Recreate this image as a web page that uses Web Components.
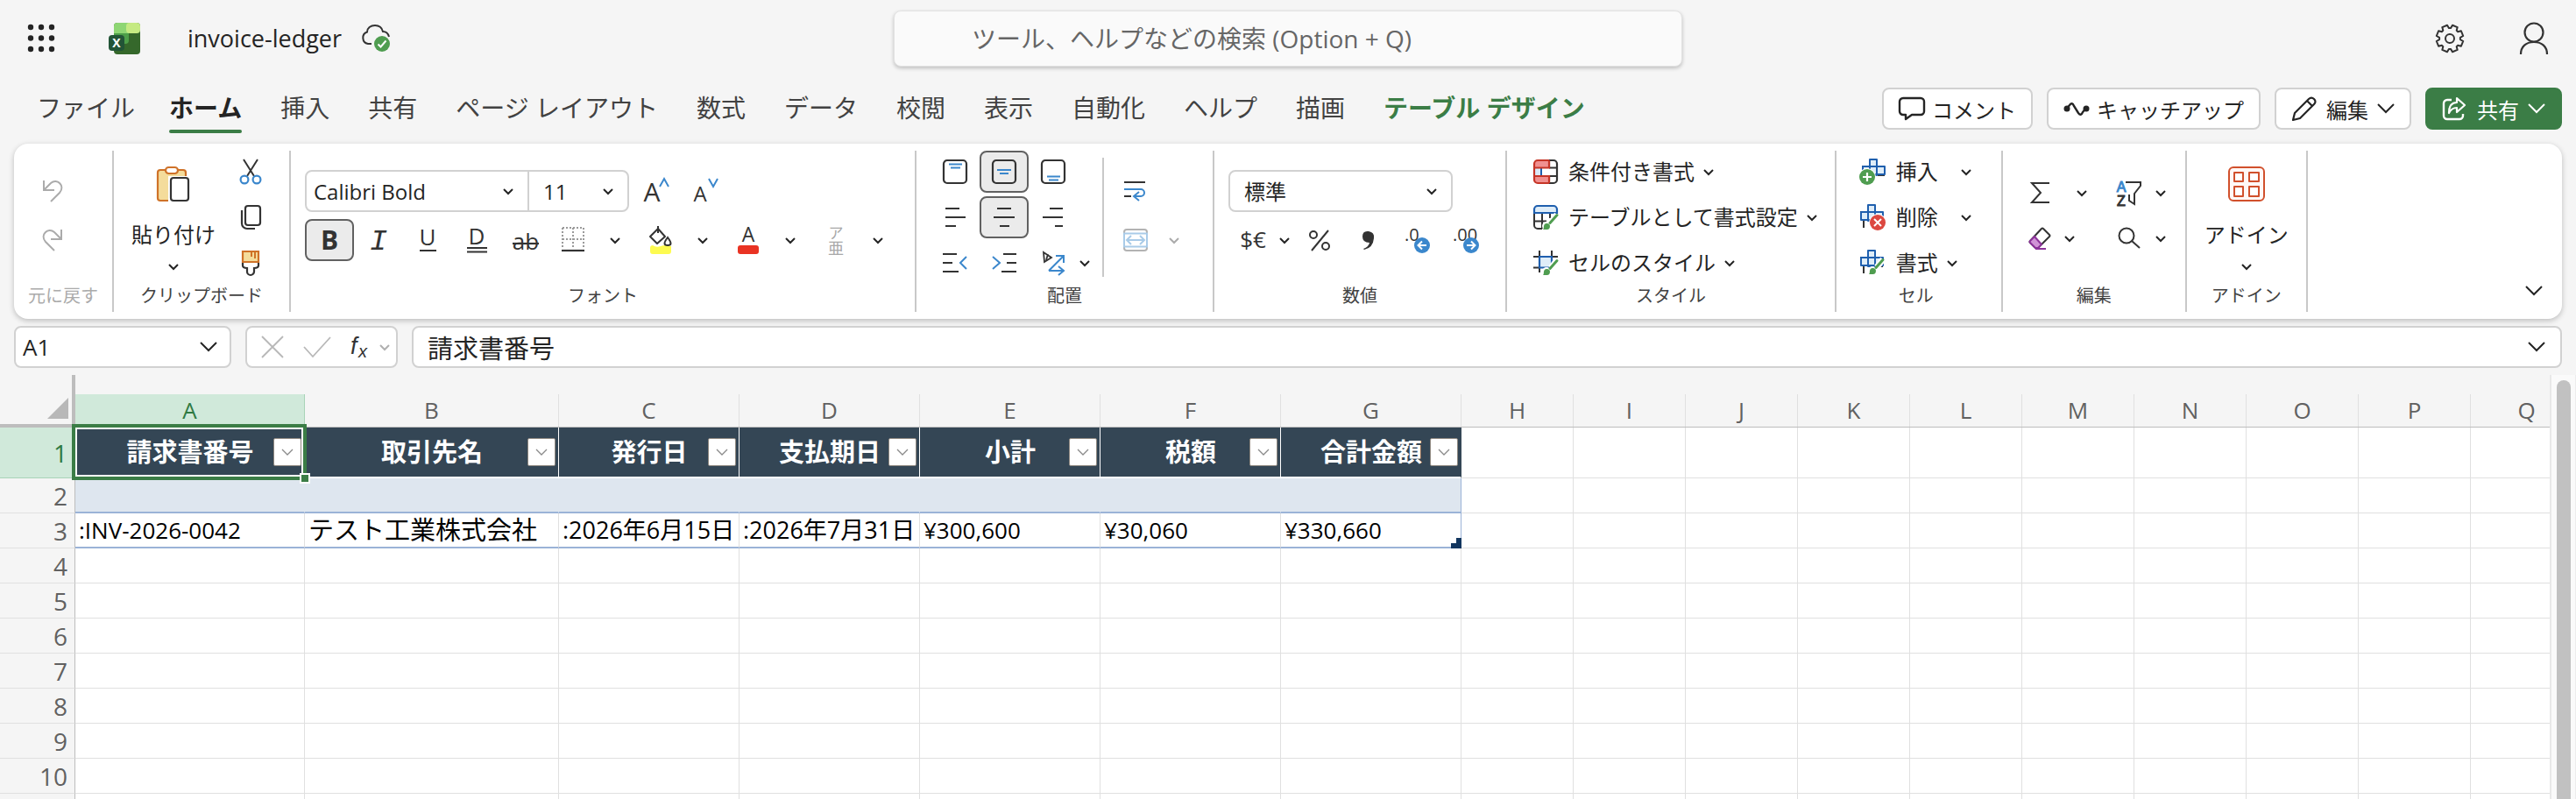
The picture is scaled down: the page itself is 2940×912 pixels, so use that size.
<!DOCTYPE html>
<html lang="ja">
<head>
<meta charset="utf-8">
<title>invoice-ledger</title>
<style>
  html, body {
    margin: 0;
    height: 100%;
    overflow: hidden;
    background: #f5f5f5;
    color: #242424;
    font-family: "Open Sans", "Noto Sans CJK JP", sans-serif;
    font-size: 24px;
  }
</style>
</head>
<body>
<ledger-app></ledger-app>

<script>
// outline of the settings cog: eight teeth, notch at the top
function gearPath(cx, cy, outer, inner) {
  const points = [];
  for (let i = 0; i < 8; i++) {
    const mid = (i + 0.5) * Math.PI / 4;
    for (const [offset, r] of [[-0.3, inner], [-0.2, outer], [0.2, outer], [0.3, inner]]) {
      const a = mid + offset;
      points.push((cx + r * Math.sin(a)).toFixed(1) + " " + (cy - r * Math.cos(a)).toFixed(1));
    }
  }
  return "M" + points.join("L") + "Z";
}

const INK = "#333";
const BLUE = "#3b87cc";
const NAVY = "#1f5fae";
const GREEN = "#4f9d50";

const sheetCross = `<path d="M12 9H1M5 19V27M14 27V19M19 9H27M19 19H27" stroke="${INK}" stroke-width="2"/>
  <path d="M10 1h8v8h9v9h-9v1h-8v-1H2V9h8z" fill="#dfedf8" stroke="${NAVY}" stroke-width="2" stroke-linejoin="round"/>
  <path d="M10 9h8v9h-8z" stroke="${NAVY}" stroke-width="2"/>`;
const brushMark = `<path d="M27 11l-7 9" stroke="#fff" stroke-width="7"/><circle cx="15" cy="24" r="5" fill="#fff"/>
  <path d="M27 11.5l-8 9" stroke="${GREEN}" stroke-width="3" stroke-linecap="round"/>
  <path d="M11 28q1-1 1-4a3.5 3.5 0 1 1 3 4z" fill="${GREEN}"/>`;

// name: [width, height, markup]
const ICONS = {
  waffle: [32, 32, [3, 15.5, 28].map(y => [4, 16, 28].map(x => `<circle cx="${x}" cy="${y}" r="3.2" fill="#242424"/>`).join("")).join("")],
  excel: [36, 36, `<rect x="6" width="30" height="36" rx="4" fill="#35682b"/>
    <path d="M6 12V4a4 4 0 0 1 4-4h13v12z" fill="#8ed673"/>
    <rect x="20" width="16" height="12" rx="4" fill="#c5ea82"/>
    <path d="M6 12h17v8a4 4 0 0 1-4 4H6z" fill="#4d9f49"/>
    <rect y="14" width="18" height="18" rx="4" fill="#225437"/>
    <text x="9" y="28" font-size="14" font-weight="700" fill="#fff" text-anchor="middle">X</text>`],
  cloud: [34, 32, `<path d="M12 22H8a7 7 0 0 1-1-13.500C7 4 11 1 16 1c5 0 8 3 9 7 3 0 6 2 7 6" stroke="${INK}" stroke-width="2"/>
    <circle cx="24" cy="22" r="9" fill="${GREEN}"/><path d="M19.500 22.500l3 3 6-7" stroke="#fff" stroke-width="2"/>`],
  gear: [34, 34, `<path d="${gearPath(17, 17, 15.5, 12)}" stroke="${INK}" stroke-width="2" stroke-linejoin="round"/>
    <circle cx="17" cy="17" r="5" stroke="${INK}" stroke-width="2"/>`],
  person: [34, 38, `<circle cx="17" cy="12" r="10.5" stroke="${INK}" stroke-width="2.2"/>
    <path d="M2 37c0-9 6-14 15-14s15 5 15 14" stroke="${INK}" stroke-width="2.2"/>`],
  comment: [30, 28, `<path d="M5 2h20a4 4 0 0 1 4 4v11a4 4 0 0 1-4 4H15l-7 5v-5H5a4 4 0 0 1-4-4V6a4 4 0 0 1 4-4z" stroke="#242424" stroke-width="2.4" stroke-linejoin="round"/>`],
  catchup: [30, 28, `<path d="M3 15l4-5q3-4 5 1l5 8q3 4 5-1l4-5" stroke="#242424" stroke-width="2.4"/>
    <circle cx="4" cy="14" r="3.5" fill="#242424"/><circle cx="26" cy="14" r="3.500" fill="#242424"/>`],
  pencil: [30, 30, `<path d="M2 28l2-8L20 4q3-3 6 0t0 6L10 26zM18 6l6 6" stroke="#242424" stroke-width="2.2" stroke-linejoin="round"/>`],
  share: [30, 28, `<path d="M11 4H6a4 4 0 0 0-4 4v14a4 4 0 0 0 4 4h14a4 4 0 0 0 4-4v-2" stroke="#fff" stroke-width="2.4"/>
    <path d="M17 2l9 8-9 8v-5c-5 0-7 2-9 6 0-8 3-12 9-12z" stroke="#fff" stroke-width="2.2" stroke-linejoin="round"/>`],
  chevron: [16, 16, `<path d="M3 6l5 5 5-5" stroke="currentColor" stroke-width="2"/>`],
  chevronWide: [20, 16, `<path d="M1 3l9 9 9-9" stroke="currentColor" stroke-width="2"/>`],
  chevronThin: [16, 16, `<path d="M2 5l6 6 6-6" stroke="#8a8a8a" stroke-width="1.3"/>`],
  undo: [24, 26, `<path d="M2 1v11h12M2 12l8-8c7-6 17 3 10 11L10 25" stroke="#ababab" stroke-width="2"/>`],
  redo: [24, 26, `<path d="M22 1v11H10M22 12l-8-8c-7-6-17 3-10 11L14 25" stroke="#ababab" stroke-width="2"/>`],
  paste: [38, 40, `<rect x="1" y="4" width="32" height="35" rx="3" fill="#f4dc9b" stroke="#cf7228" stroke-width="2.2"/>
    <rect x="10" y="1" width="14" height="7" rx="3.5" fill="#fff" stroke="#cf7228" stroke-width="2.2"/>
    <path d="M13 41V11h22v30z" fill="#fff"/>
    <rect x="16" y="13" width="20" height="26" rx="3" fill="#fff" stroke="${INK}" stroke-width="2.2"/>`],
  cut: [26, 28, `<path d="M5 0l12 19M21 0L9 19" stroke="${INK}" stroke-width="2"/>
    <circle cx="6" cy="23" r="4.4" stroke="${BLUE}" stroke-width="2.2"/><circle cx="20" cy="23" r="4.4" stroke="${BLUE}" stroke-width="2.2"/>`],
  copy: [24, 28, `<rect x="6" y="1" width="17" height="22" rx="3" stroke="${INK}" stroke-width="2.2"/>
    <path d="M2 6v15a6 6 0 0 0 6 6h9" stroke="${INK}" stroke-width="2.2"/>`],
  painter: [22, 28, `<path d="M2 14v3q0 3 5 3v4a3.5 3.5 0 0 0 8 0v-4q5 0 5-3v-3" stroke="${INK}" stroke-width="2.2"/>
    <path d="M2 1h18v12H2z" fill="#f4dc9b" stroke="#cf7228" stroke-width="2.2"/><path d="M12 2v5M16 2v7" stroke="#cf7228" stroke-width="2"/>`],
  grow: [30, 32, `<text x="9" y="28" font-size="30" text-anchor="middle" fill="${INK}">A</text>
    <path d="M18 11l5-9 5 9" stroke="${BLUE}" stroke-width="2"/>`],
  shrink: [30, 32, `<text x="8" y="28" font-size="24" text-anchor="middle" fill="${INK}">A</text>
    <path d="M18 2l5 9 5-9" stroke="${BLUE}" stroke-width="2"/>`],
  bold: [28, 30, `<text x="14" y="26" font-size="30" font-weight="700" text-anchor="middle" fill="${INK}">B</text>`],
  italic: [28, 30, `<text x="14" y="26" font-size="34" font-style="italic" font-family="Liberation Mono" text-anchor="middle" fill="${INK}">I</text>`],
  underline: [28, 30, `<text x="14" y="21" font-size="26" text-anchor="middle" fill="${INK}">U</text><path d="M5 27h19" stroke="${INK}" stroke-width="2"/>`],
  doubleUnderline: [28, 30, `<text x="14" y="20" font-size="26" text-anchor="middle" fill="${INK}">D</text>
    <path d="M3 24h23M3 28.5h23" stroke="${INK}" stroke-width="2"/>`],
  strike: [32, 30, `<text x="16" y="26" font-size="26" text-anchor="middle" fill="${INK}">ab</text><path d="M1 19h30" stroke="${INK}" stroke-width="2.2"/>`],
  borders: [26, 28, `<path d="M1 0h24M1 13h24M1 0v24M13 0v24M25 0v24" stroke="#9a9a9a" stroke-width="2" stroke-dasharray="2 2"/>
    <path d="M0 26h26" stroke="${INK}" stroke-width="2.2"/>`],
  fill: [28, 32, `<path d="M2 25q0-3 3-3 4 3 9 1t12 0v6q0 3-3 3H5q-3 0-3-3z" fill="#fdfb50"/>
    <path d="M11 3l8 9-9 8-8-8zM11 0v8" stroke="${INK}" stroke-width="2" stroke-linejoin="round"/>
    <path d="M22 13q7 9 0 9t0-9z" fill="#fff" stroke="${INK}" stroke-width="2"/>`],
  fontColor: [26, 32, `<text x="13" y="18" font-size="23" text-anchor="middle" fill="${INK}">A</text><rect x="1" y="22" width="24" height="10" rx="3" fill="#e93323"/>`],
  ruby: [22, 34, `<text x="11" y="15" font-size="17" text-anchor="middle" fill="#a8a8a8">ア</text><text x="11" y="33" font-size="18" text-anchor="middle" fill="#a8a8a8">亜</text>`],
  alignTop: [28, 28, `<rect x="1" y="1" width="26" height="26" rx="4" stroke="${INK}" stroke-width="2.2"/><path d="M7 5.5h15M9 9.5h11" stroke="${BLUE}" stroke-width="2"/>`],
  alignMiddle: [28, 28, `<rect x="1" y="1" width="26" height="26" rx="4" stroke="${INK}" stroke-width="2.2"/><path d="M6 12h16M9 16h10" stroke="${BLUE}" stroke-width="2"/>`],
  alignBottom: [28, 28, `<rect x="1" y="1" width="26" height="26" rx="4" stroke="${INK}" stroke-width="2.2"/><path d="M7 19.5h15M9 23.5h11" stroke="${BLUE}" stroke-width="2"/>`],
  alignLeft: [24, 24, `<path d="M1 2h16M1 12h23M1 22h12" stroke="${INK}" stroke-width="2"/>`],
  alignCenter: [24, 24, `<path d="M4 2h16M0 12h24M7 22h11" stroke="${INK}" stroke-width="2"/>`],
  alignRight: [24, 24, `<path d="M8 2h15M0 12h23M14 22h9" stroke="${INK}" stroke-width="2"/>`],
  outdent: [28, 24, `<path d="M0 2h16M0 12h11M0 22h18" stroke="${INK}" stroke-width="2"/><path d="M27 5l-7 7 7 7" stroke="${BLUE}" stroke-width="2"/>`],
  indent: [28, 24, `<path d="M13 2h15M17 12h11M11 22h17" stroke="${INK}" stroke-width="2"/><path d="M1 5l8 7-8 7" stroke="${BLUE}" stroke-width="2"/>`],
  orientation: [28, 28, `<path d="M3 2l9 6-8 5zM8 4l-2 7" stroke="${INK}" stroke-width="1.8"/>
    <path d="M9 23L26 6M17 6h9v8M9 23h16M20 18l6 5-6 5" stroke="${BLUE}" stroke-width="2"/>`],
  wrap: [26, 24, `<path d="M0 2h24M0 18h8" stroke="${INK}" stroke-width="2"/><path d="M0 10h19a4 4 0 0 1 0 8h-7M17 13l-6 5 6 5" stroke="${BLUE}" stroke-width="2"/>`],
  merge: [28, 26, `<rect x="1" y="1" width="26" height="24" rx="3" stroke="#b3b3b3" stroke-width="2"/>
    <path d="M0 5.5h28M0 20.5h28M1 5v16M27 5v16M5 13h18M9 8l-5 5 5 5M19 8l5 5-5 5" stroke="#a9cbe8" stroke-width="2"/>`],
  currency: [34, 30, `<text x="17" y="24" font-size="26" text-anchor="middle" fill="${INK}">$€</text>`],
  percent: [28, 28, `<circle cx="7" cy="8" r="4" stroke="${INK}" stroke-width="2"/><circle cx="21" cy="21" r="4" stroke="${INK}" stroke-width="2"/><path d="M24 3L5 26" stroke="${INK}" stroke-width="2"/>`],
  comma: [16, 24, `<path d="M2 22q6-2 7-7-8 0-8-7t7-6q7 1 6 8-1 11-11 13z" fill="${INK}"/>`],
  lessDecimal: [30, 32, `<text x="0" y="17" font-size="20" fill="${INK}">.0</text><circle cx="20" cy="22" r="9" fill="${BLUE}"/>
    <path d="M25 22H16M20 17.5L15.5 22l4.5 4.5" stroke="#fff" stroke-width="2"/>`],
  moreDecimal: [30, 32, `<text x="-1" y="17" font-size="20" fill="${INK}">.00</text><circle cx="20" cy="22" r="9" fill="${BLUE}"/>
    <path d="M15 22h9M20 17.5l4.5 4.5-4.5 4.5" stroke="#fff" stroke-width="2"/>`],
  conditional: [28, 28, `<path d="M18 1h5a4 4 0 0 1 4 4v18a4 4 0 0 1-4 4h-5M18 9.5h9M18 19h9M18 1v8M18 19v8" stroke="${INK}" stroke-width="2.2"/>
    <path d="M1 9.5h8V19H1z" fill="#d9eafa"/><path d="M9 9.5V19" stroke="${NAVY}" stroke-width="2"/>
    <path d="M18 1v8.5H1V5a4 4 0 0 1 4-4zM18 27v-8H1v4a4 4 0 0 0 4 4z" fill="#f09090"/>
    <path d="M18 1v8.5H1M18 27v-8H1M18 1H5a4 4 0 0 0-4 4v18a4 4 0 0 0 4 4h13" stroke="#c63527" stroke-width="2.2"/>`],
  tableFormat: [28, 28, `<path d="M1 9v14a4 4 0 0 0 4 4h5M1 18.5h14M10 9v18M19 9v6" stroke="${INK}" stroke-width="2"/>
    <path d="M1 9V5a4 4 0 0 1 4-4h18a4 4 0 0 1 4 4v4z" fill="#dfedf8" stroke="${NAVY}" stroke-width="2.2"/>${brushMark}`],
  cellStyle: [28, 28, `<path d="M7 0v25M21 0v8M0 7h28M0 19.5h8" stroke="${INK}" stroke-width="2"/>
    <path d="M7 7h14v12.5H7z" fill="#dfedf8" stroke="${NAVY}" stroke-width="2.2"/>${brushMark}`],
  insertCells: [30, 30, `<g transform="translate(2 0)">${sheetCross}</g><circle cx="9" cy="21" r="10" fill="#fff"/><circle cx="9" cy="21" r="9" fill="${GREEN}"/>
    <path d="M9 16v10M4 21h10" stroke="#fff" stroke-width="2.2"/>`],
  deleteCells: [30, 30, `${sheetCross}<circle cx="21" cy="21" r="10" fill="#fff"/><circle cx="21" cy="21" r="9" fill="#dc4840"/>
    <path d="M17 17l8 8M25 17l-8 8" stroke="#fff" stroke-width="2"/>`],
  formatCells: [30, 30, `${sheetCross}${brushMark}`],
  sum: [24, 26, `<path d="M23 2H3l10 11L3 24h20" stroke="${INK}" stroke-width="2"/>`],
  sortFilter: [28, 30, `<path d="M9 3h18v4l-7 9v12l-6-4v-7" stroke="${INK}" stroke-width="2"/><path d="M-1 0h11v15H-1z" fill="#fff"/>
    <text x="5" y="14" font-family="Liberation Sans" font-size="16" text-anchor="middle" fill="${BLUE}" stroke="${BLUE}">A</text>
    <text x="5" y="30" font-family="Liberation Sans" font-size="16" text-anchor="middle" fill="${INK}" stroke="${INK}">Z</text>`],
  eraser: [26, 26, `<path d="M2 16L15 2q1-1 2 0l7 7q1 1 0 2L11 24H8l-6-6q-1-1 0-2z" stroke="${INK}" stroke-width="2"/>
    <path d="M7 11l8 9-4 4H8l-6-6q-1-1 0-2z" fill="#d093d6" stroke="#8c339a" stroke-width="2"/><path d="M8 25h12" stroke="#8c339a" stroke-width="2"/>`],
  find: [26, 26, `<circle cx="10" cy="10" r="8.5" stroke="${INK}" stroke-width="2"/><path d="M16 16l9 8" stroke="${INK}" stroke-width="2"/>`],
  addin: [42, 40, `<rect x="1" y="1" width="40" height="38" rx="5" fill="#fff8f6" stroke="#d1502c" stroke-width="2"/>
    <path d="M7 7h10v10H7zM24 7h11v10H24zM7 23h10v11H7zM24 23h11v11H24z" fill="#fff" stroke="#d1502c" stroke-width="2" stroke-linejoin="round"/>`],
  cancel: [26, 26, `<path d="M1 1l24 24M25 1L1 25" stroke="#b8b8b8" stroke-width="1.8"/>`],
  accept: [32, 26, `<path d="M1 13l10 11L31 2" stroke="#b8b8b8" stroke-width="1.8"/>`],
  fx: [26, 30, `<text x="1" y="23" font-size="27" font-style="italic" fill="${INK}">f</text><text x="10" y="27" font-size="20" font-style="italic" fill="${INK}">x</text>`]
};

class AppIcon extends HTMLElement {
  connectedCallback() {
    if (this.shadowRoot) return;
    const [width, height, markup] = ICONS[this.getAttribute("name")];
    this.attachShadow({ mode: "open" }).innerHTML = `
      <style>
        :host { display: inline-flex; flex: none; }
        svg { display: block; overflow: visible; }
      </style>
      <svg width="${width}" height="${height}" viewBox="0 0 ${width} ${height}" fill="none" aria-hidden="true">${markup}</svg>`;
  }
}
customElements.define("app-icon", AppIcon);

// Ribbon button. shape: split, drop, slim, row, stack (a plain icon without one)
class ToolButton extends HTMLElement {
  connectedCallback() {
    if (this.shadowRoot) return;
    const icon = this.getAttribute("icon");
    const pressed = this.hasAttribute("pressed");
    this.attachShadow({ mode: "open" }).innerHTML = `
      <style>
        :host { display: flex; flex: none; }
        button {
          display: flex;
          align-items: center;
          justify-content: center;
          box-sizing: border-box;
          width: 56px;
          height: 48px;
          padding: 0;
          border: 2px solid transparent;
          border-radius: 8px;
          background: none;
          color: inherit;
          font: inherit;
          line-height: 32px;
          white-space: nowrap;
        }
        button[aria-pressed="true"] { background: #ebebeb; border-color: #616161; }
        button:disabled { color: #ababab; }
        :host([shape="split"]) button { width: 52px; }
        :host([shape="drop"]) button { width: 44px; }
        :host([shape="slim"]) button { width: 16px; }
        :host([shape="row"]) button { width: auto; padding: 0 0 0 12px; }
        :host([shape="row"]) .text { margin: 0 8px 0 12px; }
        :host([shape="stack"]) button {
          flex-direction: column;
          justify-content: flex-start;
          width: 104px;
          height: 152px;
          padding-top: 16px;
        }
        :host([shape="stack"]) .text { margin: 22px 0 12px; }
      </style>
      <button type="button" aria-label="${this.getAttribute("label") ?? this.textContent}"
        ${pressed ? 'aria-pressed="true"' : ""} ${this.hasAttribute("disabled") ? "disabled" : ""}>
        ${icon ? `<app-icon name="${icon}"></app-icon>` : ""}
        ${this.textContent ? `<span class="text"><slot></slot></span>` : ""}
        ${this.hasAttribute("menu") ? `<app-icon name="chevron"></app-icon>` : ""}
      </button>`;
  }
}
customElements.define("tool-button", ToolButton);

class RibbonGroup extends HTMLElement {
  connectedCallback() {
    if (this.shadowRoot) return;
    this.attachShadow({ mode: "open" }).innerHTML = `
      <style>
        :host {
          display: flex;
          flex-direction: column;
          flex: none;
          border-right: 2px solid #c8c8c8;
          padding: 0 16px 4px;
        }
        .body { display: flex; height: 152px; }
        .label {
          font-size: 20px;
          line-height: 28px;
          text-align: center;
          color: #424242;
          white-space: nowrap;
        }
        :host([off]) .label { color: #ababab; }
      </style>
      <div class="body"><slot></slot></div>
      <div class="label">${this.getAttribute("label")}</div>`;
  }
}
customElements.define("ribbon-group", RibbonGroup);

class DropList extends HTMLElement {
  connectedCallback() {
    if (this.shadowRoot) return;
    this.attachShadow({ mode: "open" }).innerHTML = `
      <style>
        :host { display: grid; align-items: center; box-sizing: border-box; height: 48px; border: 2px solid #d1d1d1; border-radius: 8px; background: #fff; }
        select {
          grid-area: 1 / 1;
          box-sizing: border-box;
          width: 100%;
          height: 44px;
          padding: 0 40px 0 var(--inset, 8px);
          border: 0;
          background: none;
          appearance: none;
          color: inherit;
          font: inherit;
        }
        app-icon { grid-area: 1 / 1; justify-self: end; margin-right: 14px; pointer-events: none; }
      </style>
      <select aria-label="${this.getAttribute("label")}"><option>${this.getAttribute("value")}</option></select>
      <app-icon name="chevron"></app-icon>`;
  }
}
customElements.define("drop-list", DropList);

class TitleBar extends HTMLElement {
  constructor() {
    super();
    this.attachShadow({ mode: "open" }).innerHTML = `
      <style>
        :host {
          display: grid;
          grid-template-columns: 1fr minmax(0, 900px) 1fr;
          align-items: center;
          height: 88px;
        }
        button { display: flex; padding: 0; border: 0; background: none; }
        .left { display: flex; align-items: center; padding-left: 31px; }
        .logo { margin-left: 61px; }
        h1 { margin: 0 22px 0 54px; font-size: 27px; line-height: 40px; font-weight: 400; }
        .right { display: flex; align-items: center; justify-content: flex-end; gap: 62px; padding-right: 31px; }
        input {
          box-sizing: border-box;
          width: 100%;
          height: 64px;
          padding: 0 88px;
          border: 1px solid #e2e2e2;
          border-radius: 8px;
          background: #fafafa;
          box-shadow: 0 2px 4px rgba(0, 0, 0, 0.22);
          font: inherit;
          font-size: 28px;
        }
        input::placeholder { color: #666; opacity: 1; }
      </style>
      <div class="left">
        <button type="button" aria-label="アプリ起動ツール"><app-icon name="waffle"></app-icon></button>
        <app-icon class="logo" name="excel"></app-icon>
        <h1>invoice-ledger</h1>
        <app-icon name="cloud"></app-icon>
      </div>
      <input type="search" aria-label="検索" placeholder="ツール、ヘルプなどの検索 (Option + Q)">
      <div class="right">
        <button type="button" aria-label="設定"><app-icon name="gear"></app-icon></button>
        <button type="button" aria-label="アカウント"><app-icon name="person"></app-icon></button>
      </div>`;
  }
}
customElements.define("title-bar", TitleBar);

const TABS = ["ホーム", "挿入", "共有", "ページ レイアウト", "数式", "データ", "校閲", "表示", "自動化", "ヘルプ", "描画", "テーブル デザイン"];

class TabBar extends HTMLElement {
  constructor() {
    super();
    const tabs = TABS.map((name, i) => {
      const kind = i === 0 ? "active" : i === TABS.length - 1 ? "context" : "";
      return `<button type="button" role="tab" class="tab ${kind}" aria-selected="${i === 0}">${name}</button>`;
    }).join("");
    this.attachShadow({ mode: "open" }).innerHTML = `
      <style>
        :host { display: flex; align-items: center; height: 72px; padding-right: 16px; margin-bottom: 4px; }
        button { font: inherit; color: inherit; white-space: nowrap; }
        .file, .tab {
          position: relative;
          height: 72px;
          padding: 0 22px 4px;
          border: 0;
          background: none;
          color: #424242;
          font-size: 28px;
        }
        .file { padding: 0 17px 4px 42px; }
        .tabs { display: flex; }
        .active { color: #242424; font-weight: 700; }
        .active::after {
          content: "";
          position: absolute;
          left: 22px;
          right: 22px;
          bottom: 8px;
          height: 4px;
          border-radius: 2px;
          background: #3b7d46;
        }
        .context { color: #3b7d46; font-weight: 700; }
        .actions { display: flex; gap: 16px; margin-left: auto; }
        .actions button {
          display: flex;
          align-items: center;
          gap: 8px;
          box-sizing: border-box;
          height: 48px;
          padding: 0 17px;
          border: 2px solid #d1d1d1;
          border-radius: 8px;
          background: #fff;
        }
        .actions .menu { gap: 10px; }
        .actions .share { border-color: #3b7d46; background: #3b7d46; color: #fff; }
      </style>
      <button type="button" class="file">ファイル</button>
      <div class="tabs" role="tablist">${tabs}</div>
      <div class="actions">
        <button type="button"><app-icon name="comment"></app-icon>コメント</button>
        <button type="button"><app-icon name="catchup"></app-icon>キャッチアップ</button>
        <button type="button" class="menu"><app-icon name="pencil"></app-icon>編集<app-icon name="chevronWide"></app-icon></button>
        <button type="button" class="menu share"><app-icon name="share"></app-icon>共有<app-icon name="chevronWide"></app-icon></button>
      </div>`;
  }
}
customElements.define("tab-bar", TabBar);

class RibbonBar extends HTMLElement {
  constructor() {
    super();
    this.attachShadow({ mode: "open" }).innerHTML = `
      <style>
        :host {
          display: flex;
          margin: 0 16px;
          padding: 8px 0;
          border-radius: 16px;
          background: #fff;
          box-shadow: 0 2px 6px rgba(0, 0, 0, 0.24);
        }
        .col { display: flex; flex-direction: column; gap: 4px; }
        .two { display: flex; flex-direction: column; gap: 8px; padding-top: 22px; }
        .edit { display: flex; flex-direction: column; gap: 4px; padding: 24px 4px 0 0; }
        .row { display: flex; }
        .pair { display: flex; width: 100px; }
        .gap { margin-left: 8px; }
        .after { margin-left: 4px; }
        .bar { width: 2px; margin: 8px 8px 8px 12px; background: #c8c8c8; }
        .tail { padding-right: 20px; }
        .cells { padding: 0 18px 4px 12px; }
        .font-name { width: 256px; border-radius: 8px 0 0 8px; }
        .font-size { width: 116px; margin: 0 4px 0 -2px; border-radius: 0 8px 8px 0; --inset: 16px; }
        .format { width: 256px; --inset: 16px; }
        .collapse { margin: auto 4px 0 auto; }
      </style>
      <ribbon-group label="元に戻す" off>
        <div class="two">
          <tool-button icon="undo" label="元に戻す" disabled></tool-button>
          <tool-button icon="redo" label="やり直し" disabled></tool-button>
        </div>
      </ribbon-group>

      <ribbon-group label="クリップボード">
        <tool-button shape="stack" icon="paste" menu>貼り付け</tool-button>
        <div class="col gap">
          <tool-button icon="cut" label="切り取り"></tool-button>
          <tool-button icon="copy" label="コピー"></tool-button>
          <tool-button icon="painter" label="書式のコピー"></tool-button>
        </div>
      </ribbon-group>

      <ribbon-group label="フォント">
        <div class="two">
          <div class="row">
            <drop-list class="font-name" label="フォント" value="Calibri Bold"></drop-list>
            <drop-list class="font-size" label="フォント サイズ" value="11"></drop-list>
            <tool-button icon="grow" label="フォント サイズの拡大"></tool-button>
            <tool-button icon="shrink" label="フォント サイズの縮小"></tool-button>
          </div>
          <div class="row">
            <tool-button icon="bold" label="太字" pressed></tool-button>
            <tool-button icon="italic" label="斜体"></tool-button>
            <tool-button icon="underline" label="下線"></tool-button>
            <tool-button icon="doubleUnderline" label="二重下線"></tool-button>
            <tool-button icon="strike" label="取り消し線"></tool-button>
            <div class="pair"><tool-button shape="split" icon="borders" label="罫線"></tool-button><tool-button shape="drop" label="罫線メニュー" menu></tool-button></div>
            <div class="pair"><tool-button shape="split" icon="fill" label="塗りつぶし"></tool-button><tool-button shape="drop" label="塗りつぶしメニュー" menu></tool-button></div>
            <div class="pair"><tool-button shape="split" icon="fontColor" label="フォントの色"></tool-button><tool-button shape="drop" label="フォントの色メニュー" menu></tool-button></div>
            <div class="pair"><tool-button shape="split" icon="ruby" label="ふりがな" disabled></tool-button><tool-button shape="drop" label="ふりがなメニュー" menu></tool-button></div>
          </div>
        </div>
      </ribbon-group>

      <ribbon-group label="配置">
        <div class="col">
          <div class="row">
            <tool-button icon="alignTop" label="上揃え"></tool-button>
            <tool-button icon="alignMiddle" label="上下中央揃え" pressed></tool-button>
            <tool-button icon="alignBottom" label="下揃え"></tool-button>
          </div>
          <div class="row">
            <tool-button icon="alignLeft" label="左揃え"></tool-button>
            <tool-button icon="alignCenter" label="中央揃え" pressed></tool-button>
            <tool-button icon="alignRight" label="右揃え"></tool-button>
          </div>
          <div class="row">
            <tool-button icon="outdent" label="インデントを減らす"></tool-button>
            <tool-button icon="indent" label="インデントを増やす"></tool-button>
            <tool-button icon="orientation" label="方向"></tool-button>
            <tool-button shape="slim" label="方向メニュー" menu></tool-button>
          </div>
        </div>
        <div class="bar"></div>
        <div class="two tail">
          <tool-button icon="wrap" label="折り返し"></tool-button>
          <div class="row">
            <tool-button icon="merge" label="結合" disabled></tool-button>
            <tool-button class="gap" shape="slim" label="結合メニュー" menu disabled></tool-button>
          </div>
        </div>
      </ribbon-group>

      <ribbon-group label="数値">
        <div class="two">
          <drop-list class="format" label="表示形式" value="標準"></drop-list>
          <div class="row">
            <tool-button icon="currency" label="通貨"></tool-button>
            <tool-button shape="slim" label="通貨メニュー" menu></tool-button>
            <tool-button class="after" icon="percent" label="パーセント"></tool-button>
            <tool-button icon="comma" label="桁区切り"></tool-button>
            <tool-button icon="lessDecimal" label="小数点以下を減らす"></tool-button>
            <tool-button icon="moreDecimal" label="小数点以下を増やす"></tool-button>
          </div>
        </div>
      </ribbon-group>

      <ribbon-group label="スタイル">
        <div class="col">
          <tool-button shape="row" icon="conditional" menu>条件付き書式</tool-button>
          <tool-button shape="row" icon="tableFormat" menu>テーブルとして書式設定</tool-button>
          <tool-button shape="row" icon="cellStyle" menu>セルのスタイル</tool-button>
        </div>
      </ribbon-group>

      <ribbon-group class="cells" label="セル">
        <div class="col">
          <div class="row"><tool-button shape="row" icon="insertCells">挿入</tool-button><tool-button shape="drop" label="挿入メニュー" menu></tool-button></div>
          <div class="row"><tool-button shape="row" icon="deleteCells">削除</tool-button><tool-button shape="drop" label="削除メニュー" menu></tool-button></div>
          <tool-button shape="row" icon="formatCells" menu>書式</tool-button>
        </div>
      </ribbon-group>

      <ribbon-group label="編集">
        <div class="edit">
          <div class="row">
            <div class="pair"><tool-button shape="split" icon="sum" label="合計"></tool-button><tool-button shape="drop" label="合計メニュー" menu></tool-button></div>
            <tool-button icon="sortFilter" label="並べ替えとフィルター"></tool-button><tool-button shape="slim" label="並べ替えメニュー" menu></tool-button>
          </div>
          <div class="row">
            <div class="pair"><tool-button shape="split" icon="eraser" label="クリア"></tool-button><tool-button shape="slim" label="クリアメニュー" menu></tool-button></div>
            <tool-button icon="find" label="検索"></tool-button><tool-button shape="slim" label="検索メニュー" menu></tool-button>
          </div>
        </div>
      </ribbon-group>

      <ribbon-group label="アドイン">
        <tool-button shape="stack" icon="addin" menu>アドイン</tool-button>
      </ribbon-group>

      <tool-button class="collapse" icon="chevronWide" label="リボンを折りたたむ"></tool-button>`;
  }
}
customElements.define("ribbon-bar", RibbonBar);

class FormulaBar extends HTMLElement {
  constructor() {
    super();
    this.attachShadow({ mode: "open" }).innerHTML = `
      <style>
        :host { display: flex; gap: 16px; margin: 8px 16px; }
        .box {
          display: flex;
          align-items: center;
          box-sizing: border-box;
          height: 48px;
          border: 2px solid #d1d1d1;
          border-radius: 8px;
          background: #fff;
        }
        input {
          flex: 1;
          min-width: 0;
          height: 44px;
          box-sizing: border-box;
          padding: 0;
          border: 0;
          background: none;
          color: inherit;
          font: inherit;
        }
        button { display: flex; padding: 0; border: 0; background: none; color: inherit; }
        .name { width: 248px; padding: 0 14px 0 8px; }
        .name input { font-size: 26px; }
        .tools { width: 174px; justify-content: space-between; padding: 0 5px 0 16px; }
        .tools .more { color: #b0b0b0; margin-left: -16px; }
        .formula { flex: 1; padding: 0 17px 0 16px; }
        .formula input { font-size: 29px; }
      </style>
      <div class="box name">
        <input aria-label="名前ボックス" value="A1">
        <button type="button" aria-label="名前の一覧"><app-icon name="chevronWide"></app-icon></button>
      </div>
      <div class="box tools">
        <button type="button" aria-label="キャンセル"><app-icon name="cancel"></app-icon></button>
        <button type="button" aria-label="入力"><app-icon name="accept"></app-icon></button>
        <button type="button" aria-label="関数の挿入"><app-icon name="fx"></app-icon></button>
        <button type="button" class="more" aria-label="関数メニュー"><app-icon name="chevron"></app-icon></button>
      </div>
      <div class="box formula">
        <input aria-label="数式バー" value="請求書番号">
        <button type="button" aria-label="数式バーの展開"><app-icon name="chevronWide"></app-icon></button>
      </div>`;
  }
}
customElements.define("formula-bar", FormulaBar);

const COLUMNS = [
  { id: "A", width: 262, title: "請求書番号", value: ":INV-2026-0042" },
  { id: "B", width: 290, title: "取引先名", value: "テスト工業株式会社", kind: "kanji" },
  { id: "C", width: 206, title: "発行日", value: ":2026年6月15日", kind: "date" },
  { id: "D", width: 206, title: "支払期日", value: ":2026年7月31日", kind: "date" },
  { id: "E", width: 206, title: "小計", value: "¥300,600" },
  { id: "F", width: 206, title: "税額", value: "¥30,060" },
  { id: "G", width: 206, title: "合計金額", value: "¥330,660" },
  ..."HIJKLMNOPQ".split("").map(id => ({ id, width: 128 }))
];
const HEAD_WIDTH = 86;
const ROWS = 10;

class SheetGrid extends HTMLElement {
  constructor() {
    super();
    const total = COLUMNS.reduce((sum, col) => sum + col.width, HEAD_WIDTH);
    this.attachShadow({ mode: "open" }).innerHTML = `
      <style>
        :host { display: flex; flex: 1; min-height: 0; overflow: hidden; }
        .view { flex: 1; min-width: 0; overflow: hidden; }
        table { width: ${total}px; table-layout: fixed; border-collapse: separate; border-spacing: 0; font-size: 26px; line-height: 36px; }
        th, td { box-sizing: border-box; padding: 0; white-space: nowrap; font-weight: 400; }

        thead th { height: 60px; padding-top: 22px; border-bottom: 1px solid #bdbdbd; color: #616161; }
        .letter { height: 37px; box-sizing: border-box; border-right: 1px solid #e0e0e0; }
        .current .letter { background: #d0e9da; border-color: #a9d3b8; color: #2f7a43; }
        thead .corner { padding-top: 20px; border-right: 4px solid #bdbdbd; border-bottom: 4px solid #bdbdbd; }
        .corner div { width: 24px; height: 24px; margin-left: 54px; background: #b8b8b8; clip-path: polygon(100% 0, 100% 100%, 0 100%); }

        tbody tr { height: 40px; }
        tbody tr.titles { height: 58px; }
        tbody th { padding-right: 8px; border-right: 1px solid #bdbdbd; border-bottom: 1px solid #e0e0e0; background: #f5f5f5; color: #616161; font-size: 28px; text-align: right; }
        tbody .titles th[scope="row"] { border-bottom-color: #a9d3b8; background: #d0e9da; color: #2f7a43; }
        td { padding-left: 4px; border-right: 1px solid #e0e0e0; border-bottom: 1px solid #e0e0e0; background: #fff; color: #000; }
        .kanji { font-size: 29px; }
        .date { font-size: 27px; }

        .title { position: relative; border-right-color: #fff; border-bottom: 2px solid #fff; background: #344655; padding: 0; color: #fff; }
        .title.last { border-right-color: #344655; }
        .title div { display: flex; align-items: center; padding: 0 3px 0 36px; }
        .title span { flex: 1; font-size: 29px; font-weight: 700; text-align: center; }
        .title button {
          display: flex;
          align-items: center;
          justify-content: center;
          box-sizing: border-box;
          width: 32px;
          height: 32px;
          padding: 0;
          border: 1px solid #8f8880;
          border-radius: 2px;
          background: #fff;
        }
        .banded { border-right-color: #dee6ef; border-bottom: 2px solid #9bb3d7; background: #dee6ef; }
        .value { border-bottom: 2px solid #9bb3d7; }
        .edge { border-right-color: #9bb3d7; }
        .value.edge { position: relative; }
        .value.edge i {
          position: absolute;
          right: -1px;
          bottom: -2px;
          width: 12px;
          height: 12px;
          background: #12365f;
          clip-path: polygon(50% 0, 100% 0, 100% 100%, 0 100%, 0 50%, 50% 50%);
        }

        .title .selection {
          position: absolute;
          inset: -4px -3px -4px -4px;
          z-index: 1;
          padding: 0;
          border: 4px solid #3b7d46;
          box-shadow: inset 0 0 0 2px #fff;
          pointer-events: none;
        }
        .selection::after {
          content: "";
          position: absolute;
          right: -8px;
          bottom: -8px;
          width: 8px;
          height: 8px;
          border: 2px solid #fff;
          background: #3b7d46;
        }
        .filler, .filler th { height: 40px; }

        .scroll { flex: none; box-sizing: border-box; width: 30px; padding: 6px 4px 0 6px; border-left: 2px solid #e8e8e8; border-right: 1px solid #ececec; background: #fafafa; }
        .thumb { width: 16px; height: 100%; border-radius: 8px 8px 0 0; background: #c1c1c1; }
      </style>
      <div class="view">
        <table>
          <colgroup><col style="width:${HEAD_WIDTH}px">${COLUMNS.map(col => `<col style="width:${col.width}px">`).join("")}</colgroup>
          <thead><tr>
            <th class="corner"><div></div></th>
            ${COLUMNS.map(col => `<th scope="col" class="${col.id === "A" ? "current" : ""}"><div class="letter">${col.id}</div></th>`).join("")}
          </tr></thead>
          <tbody>${this.rows()}</tbody>
        </table>
      </div>
      <div class="scroll"><div class="thumb"></div></div>`;
  }

  rows() {
    let html = "";
    for (let row = 1; row <= ROWS; row++) {
      html += `<tr class="${row === 1 ? "titles" : ""}"><th scope="row">${row}</th>`;
      html += COLUMNS.map(col => this.cell(row, col)).join("");
      html += "</tr>";
    }
    // empty row running under the bottom edge of the window
    return html + `<tr class="filler"><th></th>${"<td></td>".repeat(COLUMNS.length)}</tr>`;
  }

  cell(row, col) {
    if (!col.title || row > 3) return "<td></td>";
    const last = col.id === "G";
    if (row === 1) {
      const selection = col.id === "A" ? `<div class="selection"></div>` : "";
      return `<td class="title ${last ? "last" : ""}"><div><span>${col.title}</span><button type="button" aria-label="${col.title}のフィルター"><app-icon name="chevronThin"></app-icon></button></div>${selection}</td>`;
    }
    if (row === 2) return `<td class="banded ${last ? "edge" : ""}"></td>`;
    return `<td class="value ${col.kind ?? ""} ${last ? "edge" : ""}">${col.value}${last ? "<i></i>" : ""}</td>`;
  }
}
customElements.define("sheet-grid", SheetGrid);

class LedgerApp extends HTMLElement {
  constructor() {
    super();
    this.attachShadow({ mode: "open" }).innerHTML = `
      <style>
        :host { display: flex; flex-direction: column; height: 100vh; }
      </style>
      <title-bar></title-bar>
      <tab-bar></tab-bar>
      <ribbon-bar></ribbon-bar>
      <formula-bar></formula-bar>
      <sheet-grid></sheet-grid>`;
  }
}
customElements.define("ledger-app", LedgerApp);
</script>
</body>
</html>
